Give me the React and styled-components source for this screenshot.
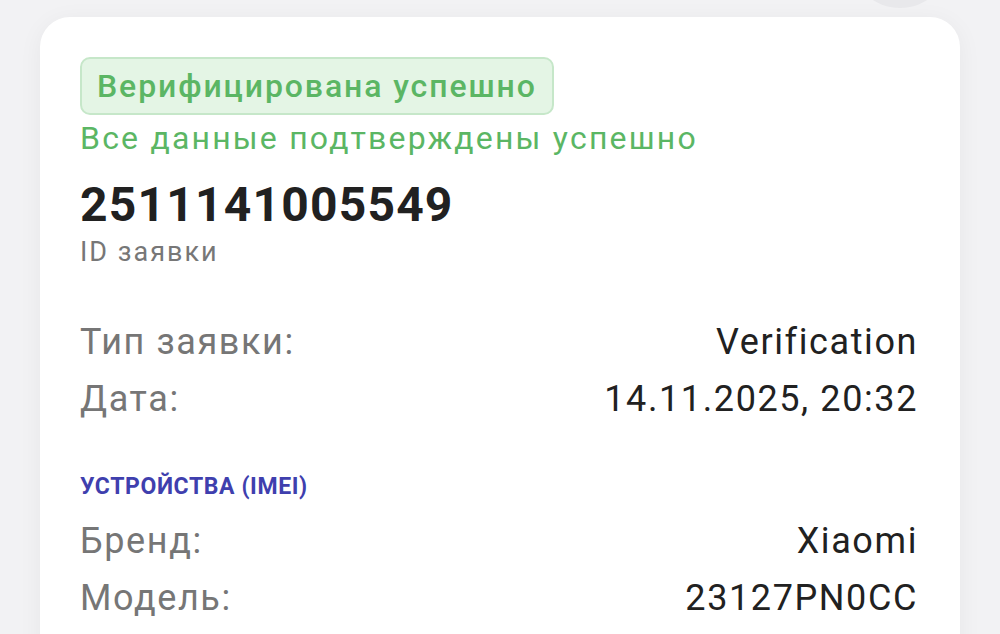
import styled, { createGlobalStyle } from "styled-components";

const GlobalStyle = createGlobalStyle`
  html, body {
    margin: 0;
    padding: 0;
    background: #f2f2f4;
    font-family: Roboto, "Noto Sans", "Liberation Sans", sans-serif;
    overflow: hidden;
  }
`;

const Page = styled.div`
  width: 1000px;
  height: 634px;
  overflow: hidden;
  box-sizing: border-box;
  padding: 0 40px;
`;

const TopBar = styled.div`
  display: flex;
  justify-content: flex-end;
  padding-right: 10px;
  height: 8px;
  margin-bottom: 9px;
`;

const RoundButton = styled.div`
  width: 100px;
  height: 100px;
  flex: none;
  border-radius: 50%;
  background: #e8e8eb;
  margin-top: -92px;
`;

const Card = styled.div`
  background: #ffffff;
  border-radius: 30px;
  padding: 40px 42px 40px 40px;
  box-shadow: 0 4px 24px rgba(0, 0, 0, 0.05);
  min-height: 700px;
`;

const Badge = styled.div`
  display: inline-flex;
  align-items: center;
  box-sizing: border-box;
  height: 58px;
  padding: 0 15px;
  border: 2px solid #c6e7c9;
  background: #e4f5e5;
  border-radius: 10px;
  color: #5bb664;
  font-size: 32px;
  font-weight: 500;
  letter-spacing: 1.9px;
`;

const Subtitle = styled.div`
  margin-top: 4px;
  color: #5bb664;
  font-size: 32px;
  line-height: 38px;
  letter-spacing: 2.2px;
`;

const RequestId = styled.div`
  margin-top: 20px;
  color: #212121;
  font-size: 48px;
  line-height: 56px;
  font-weight: 700;
  letter-spacing: 1.2px;
`;

const Caption = styled.div`
  margin-top: 3px;
  color: #777777;
  font-size: 27px;
  line-height: 32px;
  letter-spacing: 2px;
`;

const Rows = styled.div`
  margin-top: ${(p) => p.$top}px;
`;

const Row = styled.div`
  display: flex;
  justify-content: space-between;
  align-items: baseline;
  font-size: 36px;
  line-height: 57px;
  letter-spacing: 1.6px;
`;

const Label = styled.span`
  color: #767676;
`;

const Value = styled.span`
  color: #212121;
`;

const SectionTitle = styled.div`
  margin-top: 44px;
  color: #3f3fae;
  font-size: 23px;
  line-height: 30px;
  font-weight: 700;
  letter-spacing: 0.6px;
`;

const request = [
  ["Тип заявки:", "Verification"],
  ["Дата:", "14.11.2025, 20:32"],
];

const device = [
  ["Бренд:", "Xiaomi"],
  ["Модель:", "23127PN0CC"],
];

export default function App() {
  return (
    <Page>
      <GlobalStyle />
      <TopBar>
        <RoundButton />
      </TopBar>
      <Card>
        <Badge>Верифицирована успешно</Badge>
        <Subtitle>Все данные подтверждены успешно</Subtitle>
        <RequestId>2511141005549</RequestId>
        <Caption>ID заявки</Caption>
        <Rows $top={46}>
          {request.map(([l, v]) => (
            <Row key={l}>
              <Label>{l}</Label>
              <Value>{v}</Value>
            </Row>
          ))}
        </Rows>
        <SectionTitle>УСТРОЙСТВА (IMEI)</SectionTitle>
        <Rows $top={11}>
          {device.map(([l, v]) => (
            <Row key={l}>
              <Label>{l}</Label>
              <Value>{v}</Value>
            </Row>
          ))}
        </Rows>
      </Card>
    </Page>
  );
}
